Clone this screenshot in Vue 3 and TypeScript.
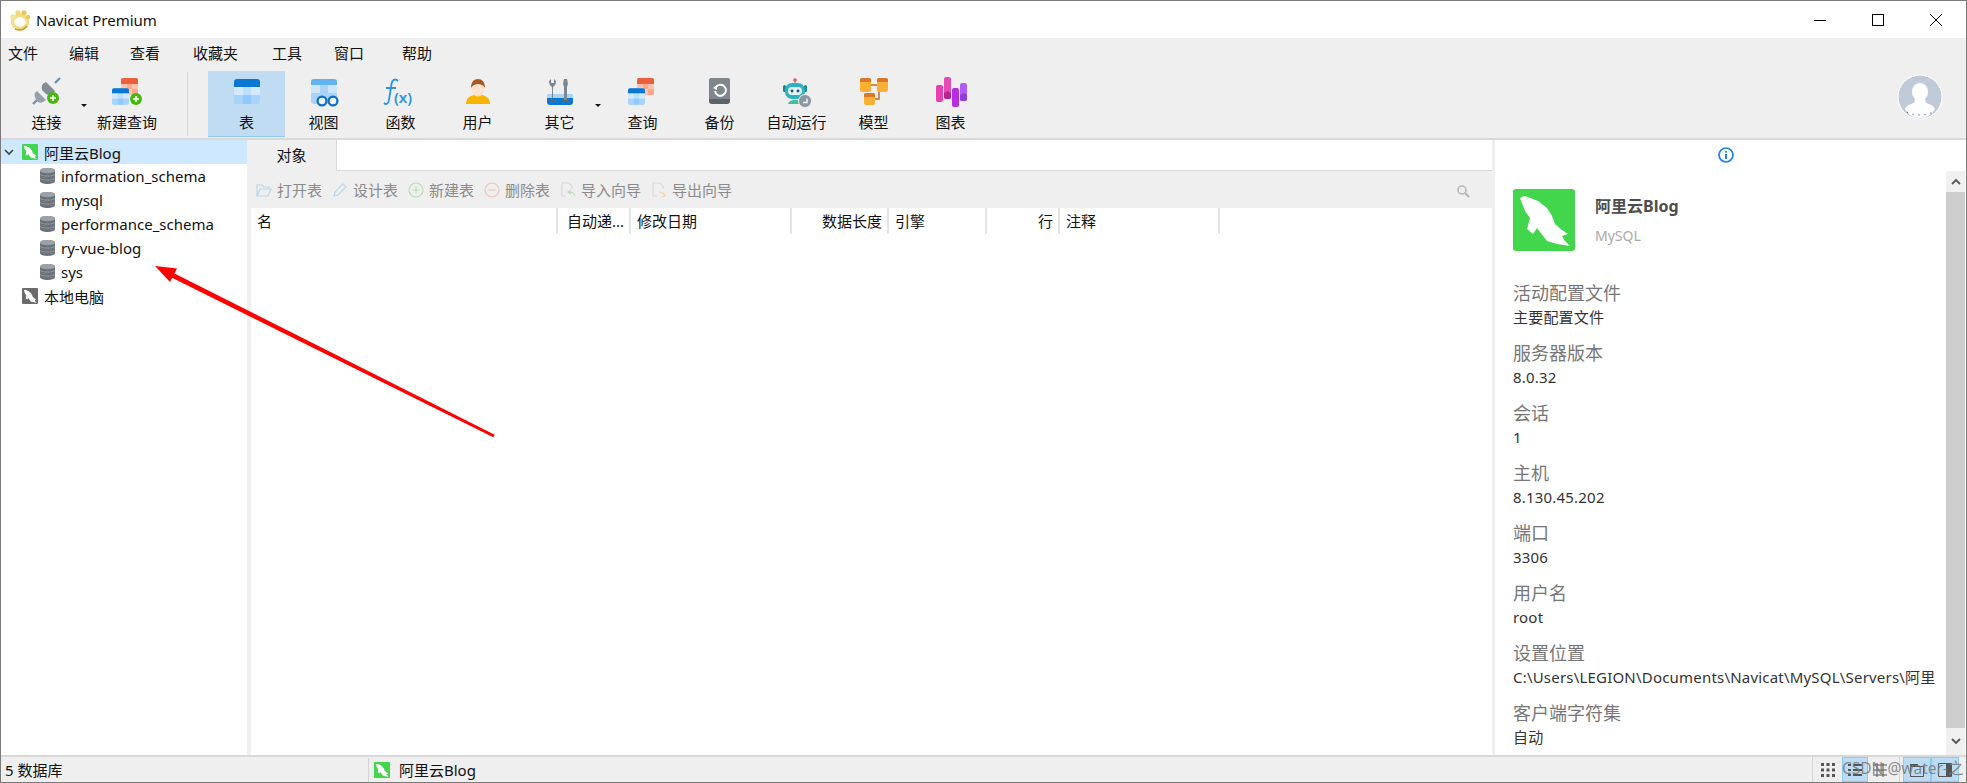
<script setup lang="ts">
const menus = [
  { t: '文件', m: 7 },
  { t: '编辑', m: 31 },
  { t: '查看', m: 31 },
  { t: '收藏夹', m: 33 },
  { t: '工具', m: 34 },
  { t: '窗口', m: 32 },
  { t: '帮助', m: 38 },
]
const dbs = ['information_schema', 'mysql', 'performance_schema', 'ry-vue-blog', 'sys']
const actions = [
  { t: '打开表', k: 'open', w: 76 },
  { t: '设计表', k: 'design', w: 76 },
  { t: '新建表', k: 'add', w: 76 },
  { t: '删除表', k: 'del', w: 76 },
  { t: '导入向导', k: 'imp', w: 91 },
  { t: '导出向导', k: 'exp', w: 91 },
]
const cols = [
  { t: '名', w: 307 },
  { t: '自动递...', w: 73, right: true },
  { t: '修改日期', w: 161 },
  { t: '数据长度', w: 97, right: true },
  { t: '引擎', w: 98 },
  { t: '行', w: 73, right: true },
  { t: '注释', w: 160 },
]
const info = [
  ['活动配置文件', '主要配置文件'],
  ['服务器版本', '8.0.32'],
  ['会话', '1'],
  ['主机', '8.130.45.202'],
  ['端口', '3306'],
  ['用户名', 'root'],
  ['设置位置', 'C:\\Users\\LEGION\\Documents\\Navicat\\MySQL\\Servers\\阿里'],
  ['客户端字符集', '自动'],
]
</script>

<template>
  <div class="win">
    <svg class="defs" width="0" height="0">
      <symbol id="dolphin" viewBox="0 0 62 62">
        <path d="M7 9L11 7L15 8L25 12L34 19L39 27L42 35L49 41L55 45L49 47L52 52L57 57L44 55L34 52L24 39L20 45L14 40L17 29L12 22Z" fill="#fff" />
      </symbol>
      <symbol id="blue-table" viewBox="0 0 26 25">
        <rect width="26" height="25" rx="3" fill="#a8d4fb" />
        <path d="M0 8V3a3 3 0 0 1 3-3h20a3 3 0 0 1 3 3v5z" fill="#0a78d2" />
        <path d="M0 8h9v8H0zM17 8h9v8h-9z" fill="#d4e9fd" />
        <path d="M9 8h8v8H9z" fill="#bcdffc" />
        <path d="M0 16h9v9H3a3 3 0 0 1-3-3zM17 16h9v6a3 3 0 0 1-3 3h-6z" fill="#a8d4fb" />
        <path d="M9 16h8v9H9z" fill="#8fc9fd" />
      </symbol>
      <symbol id="red-table" viewBox="0 0 17 17">
        <rect width="17" height="17" rx="2" fill="#ffc2ac" />
        <path d="M0 6V2a2 2 0 0 1 2-2h13a2 2 0 0 1 2 2v4z" fill="#ec5f3c" />
        <path d="M6 6h5v5H6zM11 11h6v4a2 2 0 0 1-2 2h-4z" fill="#ffa78c" />
      </symbol>
    </svg>

    <header class="titlebar">
      <svg class="app-logo" width="22" height="22" viewBox="0 0 22 22">
        <ellipse cx="11" cy="13" rx="7.500" ry="6.500" fill="none" stroke="#f2dc88" stroke-width="3.500" />
        <circle cx="4" cy="8" r="2.800" fill="#f3e2a0" />
        <circle cx="9" cy="3.800" r="2.600" fill="#f0d878" />
        <circle cx="15" cy="3.800" r="2.600" fill="#e8c85c" />
        <circle cx="19" cy="8" r="2.200" fill="#e8c85c" />
        <path d="M6 20c4 1.500 9 1 12-3" fill="none" stroke="#c99c2e" stroke-width="1.600" />
      </svg>
      <span class="app-name">Navicat Premium</span>
      <div class="win-btns">
        <svg width="12" height="12" viewBox="0 0 12 12"><path d="M0 6.500h12" stroke="#000" /></svg>
        <svg width="12" height="12" viewBox="0 0 12 12"><rect x=".5" y=".5" width="11" height="11" fill="none" stroke="#000" /></svg>
        <svg width="12" height="12" viewBox="0 0 12 12"><path d="M0 0l12 12M12 0L0 12" stroke="#000" /></svg>
      </div>
    </header>

    <nav class="menubar">
      <span v-for="m in menus" :key="m.t" :style="{ marginLeft: m.m + 'px' }">{{ m.t }}</span>
    </nav>

    <section class="toolbar">
      <div class="tool">
        <svg class="ic" width="36" height="32" viewBox="0 0 36 32">
          <path d="M4 28l7-7M26 7l5-5" stroke="#6f93b3" stroke-width="2.400" />
          <path d="M17 6l9 9a6 6 0 0 1-9 3l-4-4a6 6 0 0 1 4-8z" fill="#848d96" />
          <path d="M8 15l9 9-3 2a5 5 0 0 1-7-2l-1-3a5 5 0 0 1 2-6z" fill="#979fa8" />
          <circle cx="24" cy="22" r="6" fill="#46b80f" />
          <path d="M21 22h6M24 19v6" stroke="#fff" stroke-width="1.600" />
        </svg>
        <span>连接</span>
      </div>
      <i class="caret caret-a"></i>
      <div class="tool w-query">
        <svg class="ic" width="36" height="32" viewBox="0 0 36 32">
          <use href="#red-table" x="12" y="2" width="17" height="17" />
          <use href="#blue-table" x="3" y="12" width="17" height="17" />
          <circle cx="27" cy="23" r="6" fill="#46b80f" />
          <path d="M24 23h6M27 20v6" stroke="#fff" stroke-width="1.600" />
        </svg>
        <span>新建查询</span>
      </div>
      <i class="tool-sep"></i>
      <div class="tool active">
        <svg class="ic" width="36" height="32" viewBox="0 0 36 32"><use href="#blue-table" x="5" y="3" width="26" height="25" /></svg>
        <span>表</span>
      </div>
      <div class="tool">
        <svg class="ic" width="36" height="32" viewBox="0 0 36 32">
          <rect x="5" y="3" width="26" height="25" rx="3" fill="#a9d3f8" />
          <path d="M5 9V6a3 3 0 0 1 3-3h20a3 3 0 0 1 3 3v3z" fill="#62b2f2" />
          <path d="M5 9h9v8H5zM22 9h9v8h-9z" fill="#cde5fb" />
          <circle cx="16" cy="25" r="4.400" fill="#eef5fb" stroke="#0c6fc2" stroke-width="2.200" />
          <circle cx="27" cy="25" r="4.400" fill="#eef5fb" stroke="#0c6fc2" stroke-width="2.200" />
        </svg>
        <span>视图</span>
      </div>
      <div class="tool">
        <svg class="ic" width="36" height="32" viewBox="0 0 36 32">
          <path d="M15 5c-3-3-6-1-6.500 3L6 24c-.5 4-3 5-5 3M3 12h10" fill="none" stroke="#2a93e6" stroke-width="1.800" />
          <text x="11" y="27" class="fx">(x)</text>
        </svg>
        <span>函数</span>
      </div>
      <div class="tool">
        <svg class="ic" width="36" height="32" viewBox="0 0 36 32">
          <path d="M6 28c0-5 3-8 8-9h8c5 1 8 4 8 9z" fill="#f9b400" />
          <ellipse cx="18" cy="13" rx="6.500" ry="7.500" fill="#fde3cf" />
          <path d="M11 12c0-6 3-9 7-9s7 3 7 9c-2-3-4-4-7-4s-5 1-7 4z" fill="#a8581e" />
        </svg>
        <span>用户</span>
      </div>
      <div class="tool w-other">
        <svg class="ic" width="36" height="32" viewBox="0 0 36 32">
          <path d="M5 18h26v8a3 3 0 0 1-3 3H8a3 3 0 0 1-3-3z" fill="#0a78d2" />
          <path d="M5 18h26v4H5z" fill="#a8d4fb" />
          <path d="M10 22V11c-2-1-3-3-3-6l2-2v4h3V3l2 2c0 3-1 5-3 6v11z" fill="#7d8790" />
          <path d="M22 24V11l-1-3 1-5h3l1 5-1 3v13z" fill="#7d8790" />
          <path d="M20 24h7v2h-7zM8 24h6v2H8z" fill="#5e6871" />
        </svg>
        <span>其它</span>
      </div>
      <i class="caret caret-b"></i>
      <div class="tool">
        <svg class="ic" width="36" height="32" viewBox="0 0 36 32">
          <use href="#red-table" x="12" y="2" width="17" height="17" />
          <use href="#blue-table" x="3" y="12" width="17" height="17" />
        </svg>
        <span>查询</span>
      </div>
      <div class="tool">
        <svg class="ic" width="36" height="32" viewBox="0 0 36 32">
          <rect x="7" y="2" width="21" height="26" rx="3" fill="#5c6268" />
          <path d="M7 23V5a3 3 0 0 1 3-3h15a3 3 0 0 1 3 3v18z" fill="#7f868d" />
          <path d="M14 11a5.500 5.500 0 1 1-1 4" fill="none" stroke="#fff" stroke-width="2" />
          <path d="M11 12l4-3v5z" fill="#fff" />
        </svg>
        <span>备份</span>
      </div>
      <div class="tool">
        <svg class="ic" width="36" height="32" viewBox="0 0 36 32">
          <circle cx="16" cy="4" r="1.800" fill="#ee4d5f" />
          <path d="M16 5v5" stroke="#7f8a92" />
          <rect x="4" y="9" width="3" height="7" rx="1.500" fill="#148a94" />
          <rect x="25" y="9" width="3" height="7" rx="1.500" fill="#148a94" />
          <rect x="6" y="7" width="20" height="16" rx="7" fill="#2db3bd" />
          <rect x="9" y="11" width="14" height="8" rx="4" fill="#e3f4f6" />
          <circle cx="13" cy="15" r="1.400" fill="#264a74" />
          <circle cx="19" cy="15" r="1.400" fill="#264a74" />
          <path d="M9 28c1-3 3-4 7-4s6 1 7 4z" fill="#3fc29a" />
          <circle cx="26" cy="25" r="6.500" fill="#8c97a1" stroke="#eee" />
          <path d="M28 22.500v4h-4" fill="none" stroke="#fff" stroke-width="1.300" />
        </svg>
        <span>自动运行</span>
      </div>
      <div class="tool">
        <svg class="ic" width="36" height="32" viewBox="0 0 36 32">
          <path d="M14 9h14M23 9v14h-6" fill="none" stroke="#c4702c" stroke-width="1.500" />
          <rect x="4" y="2" width="11" height="14" rx="2" fill="#fbb034" />
          <path d="M4 6V4a2 2 0 0 1 2-2h7a2 2 0 0 1 2 2v2z" fill="#d9762b" />
          <rect x="21" y="2" width="11" height="14" rx="2" fill="#fbb034" />
          <path d="M21 6V4a2 2 0 0 1 2-2h7a2 2 0 0 1 2 2v2z" fill="#d9762b" />
          <rect x="8" y="17" width="11" height="12" rx="2" fill="#fbb034" />
          <path d="M8 21v-2a2 2 0 0 1 2-2h7a2 2 0 0 1 2 2v2z" fill="#d9762b" />
        </svg>
        <span>模型</span>
      </div>
      <div class="tool">
        <svg class="ic" width="36" height="32" viewBox="0 0 36 32">
          <rect x="3" y="9" width="7" height="17" rx="2" fill="#e83fae" />
          <rect x="11" y="1" width="7" height="22" rx="2" fill="#e64db4" />
          <path d="M11 17l3.500-2 3.500 2v4a2 2 0 0 1-2 2h-3a2 2 0 0 1-2-2z" fill="#b3268e" />
          <rect x="19" y="12" width="7" height="19" rx="2" fill="#b92ce0" />
          <rect x="27" y="7" width="7" height="18" rx="2" fill="#ad5cf6" />
          <path d="M27 19l3.500-2 3.500 2v4a2 2 0 0 1-2 2h-3a2 2 0 0 1-2-2z" fill="#8f3fd8" />
        </svg>
        <span>图表</span>
      </div>
      <div class="avatar">
        <svg width="46" height="46" viewBox="0 0 46 46">
          <circle cx="23" cy="23" r="22.500" fill="#fff" />
          <circle cx="23" cy="23" r="21.500" fill="#bfc9d8" />
          <path d="M23 9c5 0 8 4 8 9 0 3-1 5-3 7l1 4c4 1 8 3 9 6-3 6-9 9-15 9s-12-3-15-9c1-3 5-5 9-6l1-4c-2-2-3-4-3-7 0-5 3-9 8-9z" fill="#fff" />
          <path d="M10 38c7 4 19 4 26 0" fill="none" stroke="#1a2ad0" stroke-width="1" stroke-dasharray="1 5" />
        </svg>
      </div>
    </section>

    <main class="body">
      <aside class="tree">
        <div class="row conn sel">
          <svg class="chev" width="10" height="7" viewBox="0 0 10 7"><path d="M1 1l4 4 4-4" fill="none" stroke="#444" stroke-width="1.600" /></svg>
          <span class="mini green"><svg width="16" height="16"><use href="#dolphin" width="16" height="16" /></svg></span>
          <span>阿里云Blog</span>
        </div>
        <div v-for="d in dbs" :key="d" class="row db">
          <svg width="15" height="16" viewBox="0 0 15 16">
            <path d="M0 3c0-4 15-4 15 0v10c0 4-15 4-15 0z" fill="#6c737a" />
            <path d="M0 2.500c0-3.500 15-3.500 15 0s-15 3.500-15 0z" fill="#9aa1a7" />
            <path d="M0 6c3 2 12 2 15 0v1c-3 2-12 2-15 0zM0 10c3 2 12 2 15 0v1c-3 2-12 2-15 0z" fill="#8d949a" />
          </svg>
          <span>{{ d }}</span>
        </div>
        <div class="row conn">
          <span class="mini gray"><svg width="16" height="16"><use href="#dolphin" width="16" height="16" /></svg></span>
          <span>本地电脑</span>
        </div>
      </aside>

      <section class="center">
        <div class="tabs">
          <div class="tab">对象</div>
          <div class="tab-rest"></div>
        </div>
        <div class="actions">
          <div v-for="a in actions" :key="a.t" class="action" :style="{ width: a.w + 'px' }">
            <svg width="16" height="16" viewBox="0 0 16 16">
              <template v-if="a.k === 'open'">
                <path d="M1 14V3h5l2 2h5v2M1 14l3-7h11l-3 7z" fill="none" stroke="#bcd5e8" stroke-width="1.200" />
              </template>
              <template v-else-if="a.k === 'design'">
                <path d="M2 14l1-4 8-8 3 3-8 8z" fill="none" stroke="#bcd5e8" stroke-width="1.200" />
              </template>
              <template v-else-if="a.k === 'add'">
                <circle cx="8" cy="8" r="7" fill="none" stroke="#bcdcb4" stroke-width="1.200" />
                <path d="M4.500 8h7M8 4.500v7" stroke="#bcdcb4" stroke-width="1.200" />
              </template>
              <template v-else-if="a.k === 'del'">
                <circle cx="8" cy="8" r="7" fill="none" stroke="#ecc4bd" stroke-width="1.200" />
                <path d="M4.500 8h7" stroke="#ecc4bd" stroke-width="1.200" />
              </template>
              <template v-else-if="a.k === 'imp'">
                <path d="M6 14H2V1h7l3 3v3" fill="none" stroke="#d8d8d8" stroke-width="1.200" />
                <path d="M15 14c-1-3-3-4-6-4M11 8l-3 2 3 2" fill="none" stroke="#bcdcb4" stroke-width="1.200" />
              </template>
              <template v-else>
                <path d="M6 14H2V1h7l3 3v3" fill="none" stroke="#d8d8d8" stroke-width="1.200" />
                <path d="M8 10c3 0 5 1 6 4M12 11l2 3-3 1" fill="none" stroke="#f2d6a4" stroke-width="1.200" />
              </template>
            </svg>
            <span>{{ a.t }}</span>
          </div>
          <svg class="search" width="14" height="14" viewBox="0 0 14 14">
            <circle cx="6" cy="6" r="4" fill="none" stroke="#b5b5b5" stroke-width="1.500" />
            <path d="M9 9l4 4" stroke="#b5b5b5" stroke-width="2" />
          </svg>
        </div>
        <div class="grid">
          <div class="ghead">
            <div v-for="c in cols" :key="c.t" class="gcol" :class="{ right: c.right }" :style="{ width: c.w + 'px' }">{{ c.t }}</div>
          </div>
        </div>
      </section>

      <aside class="side">
        <div class="side-main">
          <div class="info-tab">
            <svg width="16" height="16" viewBox="0 0 16 16">
              <circle cx="8" cy="8" r="7" fill="none" stroke="#1b84f0" stroke-width="1.700" />
              <circle cx="8" cy="4.800" r="1.100" fill="#1b84f0" />
              <path d="M8 7v5" stroke="#1b84f0" stroke-width="2" />
            </svg>
          </div>
          <div class="conn-head">
            <span class="big-logo"><svg width="62" height="62"><use href="#dolphin" width="62" height="62" /></svg></span>
            <div class="conn-names">
              <div class="conn-title">阿里云Blog</div>
              <div class="conn-type">MySQL</div>
            </div>
          </div>
          <div v-for="i in info" :key="i[0]" class="info-item">
            <div class="info-label">{{ i[0] }}</div>
            <div class="info-value">{{ i[1] }}</div>
          </div>
        </div>
        <div class="scrollbar">
          <div class="sb-btn"><svg width="10" height="7" viewBox="0 0 10 7"><path d="M1 6l4-4 4 4" fill="none" stroke="#555" stroke-width="1.800" /></svg></div>
          <div class="sb-thumb"></div>
          <div class="sb-btn low"><svg width="10" height="7" viewBox="0 0 10 7"><path d="M1 1l4 4 4-4" fill="none" stroke="#555" stroke-width="1.800" /></svg></div>
        </div>
      </aside>
    </main>

    <footer class="status">
      <div class="st-count">5 数据库</div>
      <div class="st-conn">
        <span class="mini green"><svg width="16" height="16"><use href="#dolphin" width="16" height="16" /></svg></span>
        <span>阿里云Blog</span>
      </div>
      <div class="st-right">
        <svg class="st-grid" width="14" height="14" viewBox="0 0 14 14">
          <path d="M0 1.500h14M0 7h14M0 12.500h14" stroke="#555" stroke-width="3" stroke-dasharray="3 2.500" />
        </svg>
        <div class="st-on">
          <svg width="14" height="14" viewBox="0 0 14 14"><path d="M0 2h3M5 2h9M0 7h3M5 7h9M0 12h3M5 12h9" stroke="#555" stroke-width="2" /></svg>
        </div>
        <svg class="st-list" width="14" height="14" viewBox="0 0 14 14">
          <path d="M0 2h14M0 7h14M0 12h14M4 0v14M10 0v14" stroke="#555" />
        </svg>
        <i class="st-div"></i>
        <div class="st-on wide">
          <svg width="14" height="14" viewBox="0 0 14 14"><path d="M.5 3.500h13v10H.5z" fill="none" stroke="#555" /><path d="M0 3h8V1H0z" fill="#555" /></svg>
        </div>
        <div class="st-on wide">
          <svg width="14" height="14" viewBox="0 0 14 14"><path d="M.5.500h13v13H.5z" fill="none" stroke="#555" /><path d="M8 1h5v12H8z" fill="#555" /></svg>
        </div>
        <span class="mark">CSDN @water-之</span>
      </div>
    </footer>

    <svg class="red-arrow" width="360" height="190" viewBox="0 0 360 190">
      <path d="M21 12.800L342.700 174.700L341.300 177.300L19 17.200Z" fill="#ff0000" />
      <path d="M3 6L25 8.500L18 22Z" fill="#ff0000" />
    </svg>
  </div>
</template>

<style>
html,
body {
  margin: 0;
  background: #fff;
}
</style>

<style scoped>
.win {
  position: relative;
  width: 1967px;
  height: 783px;
  box-sizing: border-box;
  border: 1px solid #7a7a7a;
  background: #fff;
  display: flex;
  flex-direction: column;
  overflow: hidden;
  font-family: "Noto Sans", "Noto Sans CJK SC", sans-serif;
  font-size: 15px;
  color: #111;
}
.defs {
  position: absolute;
}
.titlebar {
  height: 37px;
  display: flex;
  align-items: center;
  flex: none;
}
.app-logo {
  margin-left: 8px;
}
.app-name {
  margin-left: 5px;
  font-size: 15px;
}
.win-btns {
  margin-left: auto;
  display: flex;
  gap: 46px;
  padding-right: 24px;
}
.menubar {
  height: 31px;
  flex: none;
  background: #efefef;
  display: flex;
  align-items: center;
  line-height: 1;
}
.toolbar {
  height: 69px;
  flex: none;
  background: #efefef;
  border-bottom: 2px solid #d9d9d9;
  display: flex;
  align-items: flex-start;
  padding-left: 7px;
  position: relative;
}
.tool {
  width: 77px;
  height: 66px;
  margin-top: 2px;
  flex: none;
  display: flex;
  flex-direction: column;
  align-items: center;
  box-sizing: border-box;
}
.tool .ic {
  margin-top: 5px;
}
.tool span {
  margin-top: 3px;
  line-height: 22px;
  white-space: nowrap;
}
.w-query {
  width: 78px;
}
.w-other {
  margin-left: 5px;
}
.active {
  background: #c0dcf3;
  border-bottom: 1px solid #90c8f0;
}
.tool-sep {
  width: 1px;
  height: 64px;
  margin: 3px 20px 0 21px;
  background: #d4d4d4;
}
.caret {
  flex: none;
  width: 0;
  height: 0;
  border-left: 3.500px solid transparent;
  border-right: 3.500px solid transparent;
  border-top: 3.500px solid #111;
  margin-top: 35px;
}
.caret-a {
  margin-left: -4.500px;
  margin-right: 1.500px;
}
.caret-b {
  margin-left: -3px;
  margin-right: 3px;
}
.avatar {
  margin-left: auto;
  margin-right: 23px;
  margin-top: 5px;
  height: 46px;
}
.fx {
  font-family: "Noto Sans", sans-serif;
  font-size: 15px;
  fill: #2a93e6;
  font-weight: 600;
}
.body {
  flex: 1;
  display: flex;
  min-height: 0;
}
.tree {
  width: 246px;
  flex: none;
  background: #fff;
}
.row {
  height: 24px;
  display: flex;
  align-items: center;
  white-space: nowrap;
}
.sel {
  background: #cde8ff;
}
.conn {
  padding-left: 21px;
  gap: 6px;
  position: relative;
}
.chev {
  position: absolute;
  left: 3px;
  top: 9px;
}
.db {
  padding-left: 39px;
  gap: 6px;
}
.mini {
  width: 16px;
  height: 16px;
  display: block;
  border-radius: 1px;
  flex: none;
}
.mini svg,
.big-logo svg {
  display: block;
}
.green {
  background: #41d64c;
}
.gray {
  background: #6b6b6b;
}
.center {
  width: 1245px;
  flex: none;
  background: #efefef;
  display: flex;
  flex-direction: column;
}
.tabs {
  height: 31px;
  display: flex;
  flex: none;
}
.tab {
  width: 90px;
  text-align: center;
  line-height: 30px;
  border-right: 1px solid #d9d9d9;
  box-sizing: border-box;
}
.tab-rest {
  flex: 1;
  background: #fff;
  border-bottom: 1px solid #d9d9d9;
}
.actions {
  height: 37px;
  flex: none;
  display: flex;
  align-items: center;
  padding-left: 9px;
  color: #8b8b8b;
  position: relative;
}
.action {
  display: flex;
  align-items: center;
  gap: 5px;
  flex: none;
  white-space: nowrap;
}
.search {
  position: absolute;
  right: 22px;
  top: 13px;
}
.grid {
  flex: 1;
  background: #fff;
  margin-left: 4px;
}
.ghead {
  display: flex;
  height: 26px;
}
.gcol {
  box-sizing: border-box;
  padding: 0 5px 0 6px;
  line-height: 26px;
  border-right: 2px solid #e4e4e4;
  white-space: nowrap;
  overflow: hidden;
}
.gcol.right {
  text-align: right;
}
.side {
  flex: 1;
  display: flex;
  border-left: 3px solid #efefef;
  background: #fff;
  min-width: 0;
}
.side-main {
  flex: 1;
  min-width: 0;
  overflow: hidden;
  padding-left: 18px;
  padding-right: 9px;
}
.info-tab {
  height: 30px;
  display: flex;
  align-items: center;
  justify-content: center;
  margin-left: -18px;
  padding-left: 20px;
  box-sizing: border-box;
}
.conn-head {
  display: flex;
  height: 62px;
  margin-top: 19px;
  margin-bottom: 29px;
}
.big-logo {
  width: 62px;
  height: 62px;
  background: #41d64c;
  border-radius: 3px;
  flex: none;
}
.conn-names {
  margin-left: 20px;
}
.conn-title {
  font-weight: 700;
  font-size: 16px;
  color: #4d4d4d;
  line-height: 22px;
  margin-top: 6px;
}
.conn-type {
  color: #a9a9a9;
  font-size: 14px;
  line-height: 20px;
  margin-top: 9px;
}
.info-item {
  height: 60px;
}
.info-label {
  font-size: 18px;
  line-height: 26px;
  color: #777;
}
.info-value {
  font-size: 15px;
  line-height: 22px;
  color: #333;
  letter-spacing: 0.2px;
  white-space: nowrap;
  overflow: hidden;
}
.scrollbar {
  width: 19px;
  flex: none;
  margin-top: 31px;
  margin-right: 1px;
  background: #f0f0f0;
  display: flex;
  flex-direction: column;
}
.sb-btn {
  height: 21px;
  display: flex;
  align-items: center;
  justify-content: center;
}
.sb-btn.low {
  height: 27px;
}
.sb-thumb {
  flex: 1;
  background: #cdcdcd;
}
.status {
  height: 27px;
  flex: none;
  background: #efefef;
  border-top: 2px solid #d9d9d9;
  box-sizing: border-box;
  display: flex;
  align-items: center;
}
.st-count {
  width: 367px;
  padding-left: 4px;
  box-sizing: border-box;
  flex: none;
}
.st-conn {
  height: 24px;
  flex: none;
  display: flex;
  align-items: center;
  gap: 9px;
  border-left: 1px solid #d4d4d4;
  padding-left: 5px;
}
.st-right {
  margin-left: auto;
  height: 25px;
  border-left: 1px solid #d4d4d4;
  display: flex;
  align-items: center;
  position: relative;
  padding-right: 7px;
}
.st-grid {
  margin: 0 7px 0 8px;
}
.st-on {
  width: 26px;
  height: 25px;
  box-sizing: border-box;
  background: #bcdcf5;
  border: 1px solid #90c8f0;
  display: flex;
  align-items: center;
  justify-content: center;
}
.st-on.wide {
  width: 28px;
}
.st-list {
  margin: 0 12px 0 5px;
}
.st-div {
  width: 1px;
  height: 25px;
  background: #d4d4d4;
  margin-right: 3px;
}
.mark {
  position: absolute;
  left: 29px;
  top: -1px;
  font-size: 15.500px;
  color: rgba(120, 120, 120, 0.85);
  white-space: nowrap;
}
.red-arrow {
  position: absolute;
  left: 151px;
  top: 259px;
}
</style>
